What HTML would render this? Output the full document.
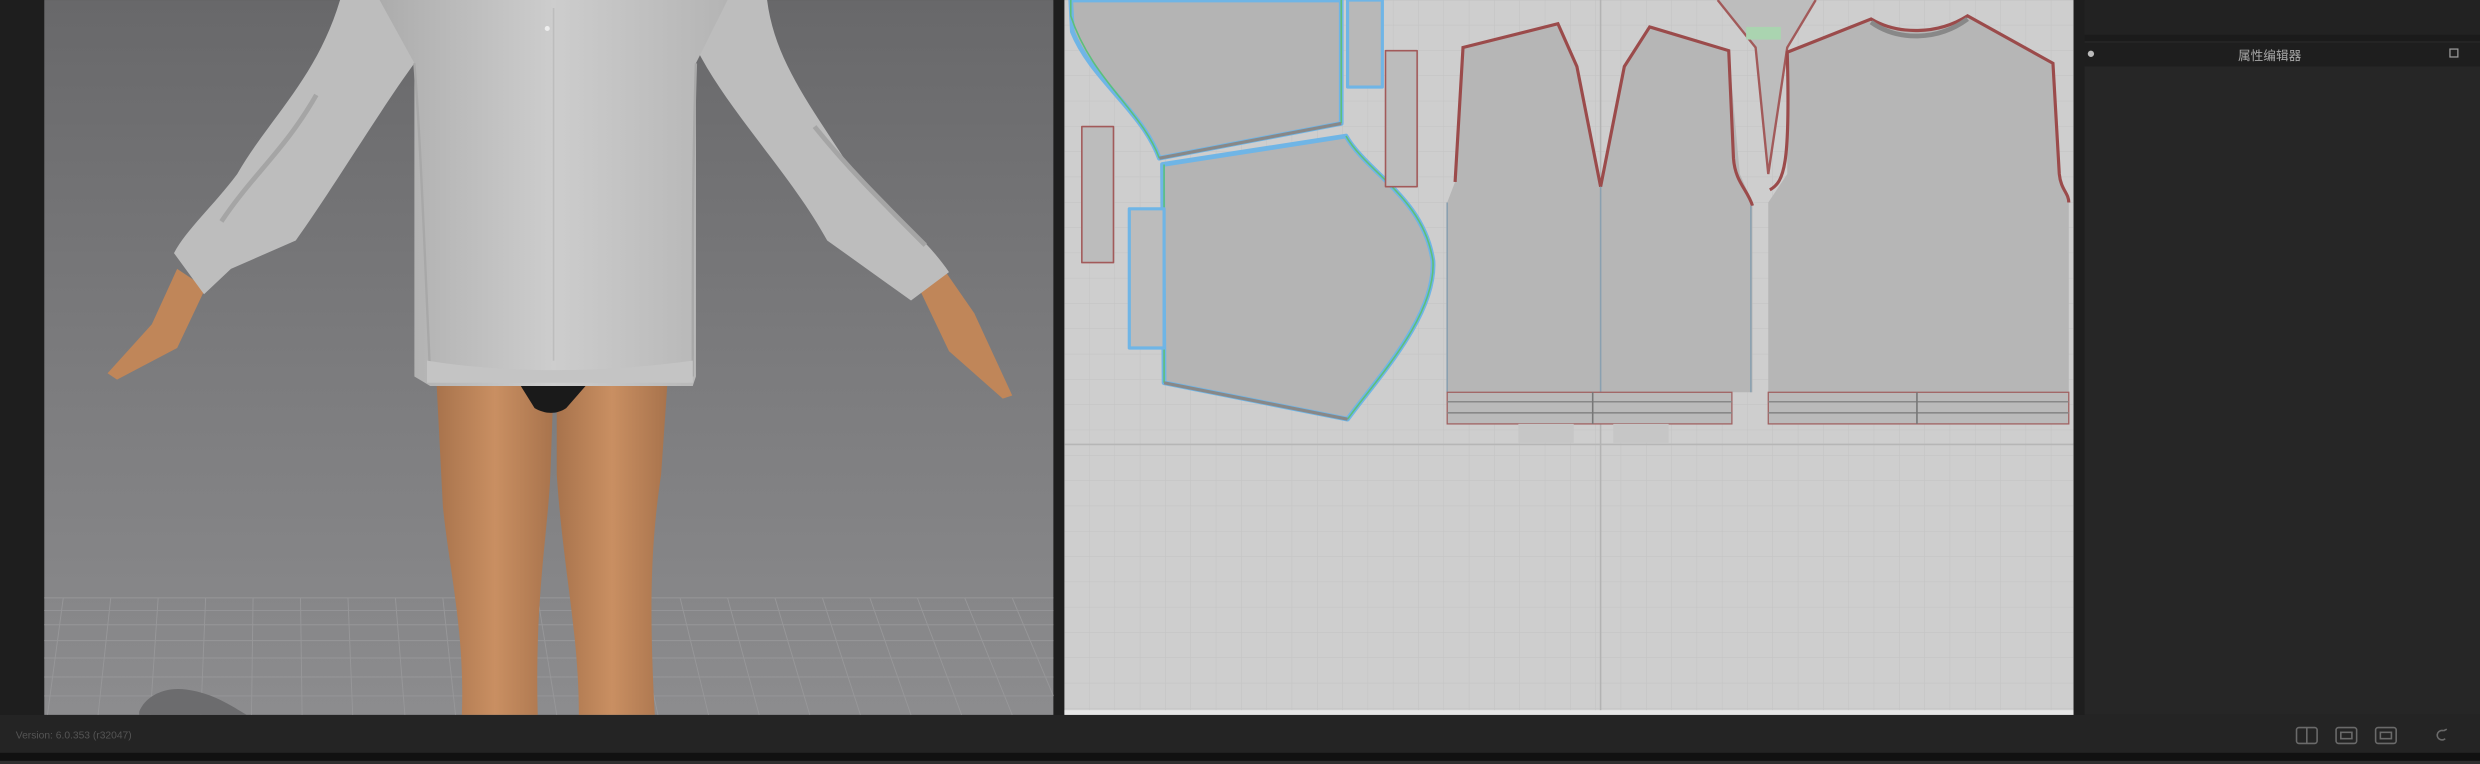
<!DOCTYPE html>
<html><head><meta charset="utf-8">
<style>
html,body{margin:0;padding:0;background:#1c1c1c;width:2480px;height:764px;overflow:hidden}
svg{display:block}
</style></head><body>
<svg width="2480" height="764" viewBox="0 0 1568 483" xmlns="http://www.w3.org/2000/svg">
<defs>
<linearGradient id="bg3" x1="0" y1="0" x2="0" y2="1">
<stop offset="0" stop-color="#68686a"/><stop offset="0.5" stop-color="#7b7b7d"/><stop offset="1" stop-color="#8c8c8e"/>
</linearGradient>
<linearGradient id="skin" x1="0" y1="0" x2="1" y2="0">
<stop offset="0" stop-color="#a8734c"/><stop offset="0.5" stop-color="#c98f62"/><stop offset="1" stop-color="#a8734c"/>
</linearGradient>
<linearGradient id="shirt" x1="0" y1="0" x2="1" y2="0">
<stop offset="0" stop-color="#acacac"/><stop offset="0.5" stop-color="#cdcdcd"/><stop offset="1" stop-color="#b4b4b4"/>
</linearGradient>
<pattern id="g2d" width="16" height="16" patternUnits="userSpaceOnUse" x="673" y="0">
<path d="M16 0V16M0 16H16" stroke="#c3c3c3" stroke-width="0.6" fill="none"/>
</pattern>
</defs>
<rect width="1568" height="483" fill="#1e1e1e"/>
<rect x="28" y="0" width="638" height="452" fill="url(#bg3)"/>
<g stroke="#979799" stroke-width="0.6" fill="none">
<path d="M28 378H666M28 386H666M28 395H666M28 405H666M28 416H666M28 428H666M28 440H666"/>
<path d="M40 378L30 452M70 378L62 452M100 378L95 452M130 378L127 452M160 378L159 452M190 378L191 452M220 378L223 452M250 378L256 452M280 378L288 452M310 378L320 452M340 378L352 452M370 378L384 452M400 378L416 452M430 378L448 452M460 378L480 452M490 378L512 452M520 378L544 452M550 378L576 452M580 378L608 452M610 378L640 452M640 378L666 440"/>
</g>
<path d="M88 450C92 440 104 434 118 436C134 438 146 446 156 452H88Z" fill="#6c6c6e"/>
<path d="M276 242H350L348 300C346 340 338 380 340 452H292C294 400 284 360 280 320Z" fill="url(#skin)"/>
<path d="M352 242H422L418 300C412 340 410 380 414 452H366C366 400 356 360 352 300Z" fill="url(#skin)"/>
<path d="M328 242H372L358 258C352 262 345 262 338 258Z" fill="#1a1a1a"/>
<path d="M112 170L130 182L112 220L74 240L68 236L96 205Z" fill="#c08659"/>
<path d="M580 180L598 172L616 198L640 250L634 252L600 222Z" fill="#c08659"/>
<path d="M262 0L215 0C200 50 170 75 150 110C135 130 118 145 110 160L129 186L146 170L187 152C210 120 240 70 262 40Z" fill="#bdbdbd"/>
<path d="M440 0L485 0C490 40 515 70 540 110C560 130 585 150 600 172L576 190L523 152C500 110 460 70 440 30Z" fill="#bdbdbd"/>
<path d="M200 60C180 95 160 110 140 140M515 80C535 105 555 125 585 155" stroke="#a5a5a5" stroke-width="3" fill="none"/>
<path d="M240 0L262 40L262 238L272 244H438L440 238L440 40L460 0Z" fill="url(#shirt)"/>
<path d="M262 40C266 90 268 150 272 238M440 40C438 100 438 160 438 238" stroke="#a8a8a8" stroke-width="1.5" fill="none"/>
<path d="M270 228C320 236 380 236 438 228V242H270Z" fill="#c4c4c4"/>
<path d="M350 5V228" stroke="#bdbdbd" stroke-width="1" fill="none"/>
<circle cx="346" cy="18" r="1.6" fill="#eee"/>
<rect x="673" y="0" width="638" height="452" fill="#cecece"/>
<rect x="673" y="0" width="638" height="452" fill="url(#g2d)"/>
<path d="M673 281H1311" stroke="#b6b6b6" stroke-width="1"/>
<path d="M1012 0V452" stroke="#b3b3b3" stroke-width="1"/>
<rect x="673" y="449" width="638" height="3" fill="#e6e6e6"/>
<g stroke-linejoin="round">
<path d="M677 0H848V78L733 100C722 70 690 50 678 20Z" fill="#b4b4b4" stroke="#6fb5e6" stroke-width="3"/>
<path d="M677 0V10C690 50 722 70 733 100M848 0V78" stroke="#5cc07a" stroke-width="1" fill="none"/>
<path d="M735 104L851 86C865 110 900 125 906 165C908 200 870 240 852 265L736 242Z" fill="#b4b4b4" stroke="#6fb5e6" stroke-width="3"/>
<path d="M851 86C865 110 900 125 906 165C908 200 870 240 852 265M736 104V242" stroke="#5cc07a" stroke-width="1" fill="none"/>
<path d="M733 100L848 78M736 242L852 265" stroke="#888" stroke-width="2"/>
<rect x="852" y="0" width="22" height="55" fill="#b8b8b8" stroke="#6fb5e6" stroke-width="2"/>
<rect x="876" y="32" width="20" height="86" fill="#bcbcbc" stroke="#a25a5a" stroke-width="1"/>
<rect x="684" y="80" width="20" height="86" fill="#bcbcbc" stroke="#a25a5a" stroke-width="1"/>
<rect x="714" y="132" width="22" height="88" fill="#bcbcbc" stroke="#6fb5e6" stroke-width="2"/>
</g>
<path d="M925 30L985 15L997 42L1012 118L1027 42L1043 17L1093 32L1100 110L1108 128V248H915V128L920 115Z" fill="#b6b6b6"/>
<path d="M920 115L925 30L985 15L997 42L1012 118L1027 42L1043 17L1093 32L1096 100C1097 115 1105 120 1108 130" stroke="#9b4b4b" stroke-width="2" fill="none"/>
<path d="M1012 118V248M915 128V248M1107 130V248" stroke="#8aa0b0" stroke-width="1" fill="none"/>
<path d="M1086 0L1110 30L1118 110L1130 30L1148 0" stroke="#a25a5a" stroke-width="1.5" fill="#bdbdbd"/>
<rect x="1104" y="17" width="22" height="8" fill="#aad4b0"/>
<path d="M1130 33L1183 12C1200 22 1225 22 1244 10L1298 40L1302 110L1308 125V248H1118V128L1130 110Z" fill="#b6b6b6"/>
<path d="M1119 120C1128 115 1132 105 1130 33L1183 12C1200 22 1225 22 1244 10L1298 40L1302 110C1303 120 1308 122 1308 128" stroke="#9b4b4b" stroke-width="2" fill="none"/>
<path d="M1183 14C1200 26 1225 26 1244 12" stroke="#888" stroke-width="3" fill="none"/>
<g stroke="#a06060" stroke-width="0.8" fill="#bababa">
<rect x="915" y="248" width="180" height="20"/><rect x="1118" y="248" width="190" height="20"/>
</g>
<path d="M915 254H1095M915 261H1095M1118 254H1308M1118 261H1308" stroke="#888" stroke-width="1"/>
<path d="M1007 248V268M1212 248V268" stroke="#777" stroke-width="1"/>
<rect x="960" y="268" width="35" height="12" fill="#c6c6c6"/><rect x="1020" y="268" width="35" height="12" fill="#c6c6c6"/>
<rect x="1318" y="0" width="250" height="452" fill="#262626"/>
<rect x="1318" y="0" width="250" height="22" fill="#222"/>
<rect x="1318" y="22" width="250" height="4" fill="#1b1b1b"/>
<rect x="1318" y="27" width="250" height="15" fill="#1e1e1e"/>
<circle cx="1322" cy="34" r="2" fill="#bbb"/>
<text x="1435" y="38" font-family="Liberation Sans, Noto Sans CJK SC, sans-serif" font-size="8" fill="#a8a8a8" text-anchor="middle">属性编辑器</text>
<rect x="1549" y="31" width="5" height="5" fill="none" stroke="#999" stroke-width="0.8"/>
<rect x="0" y="452" width="1568" height="24" fill="#242424"/>
<rect x="0" y="476" width="1568" height="7" fill="#111"/>
<rect x="0" y="481" width="1568" height="2" fill="#2f2f2f"/>
<text x="10" y="467" font-family="Liberation Sans, sans-serif" font-size="6.5" fill="#555">Version: 6.0.353 (r32047)</text>
<g fill="none" stroke="#6a6a6a" stroke-width="1">
<rect x="1452" y="460" width="13" height="10" rx="1.5"/><path d="M1458.5 460V470"/>
<rect x="1477" y="460" width="13" height="10" rx="1.5"/><rect x="1480" y="463" width="7" height="4"/>
<rect x="1502" y="460" width="13" height="10" rx="1.5"/><rect x="1505" y="463" width="7" height="4"/>
<path d="M1545 462A3 3 0 1 0 1546 467M1545 462L1547 461"/>
</g>
</svg>
</body></html>
